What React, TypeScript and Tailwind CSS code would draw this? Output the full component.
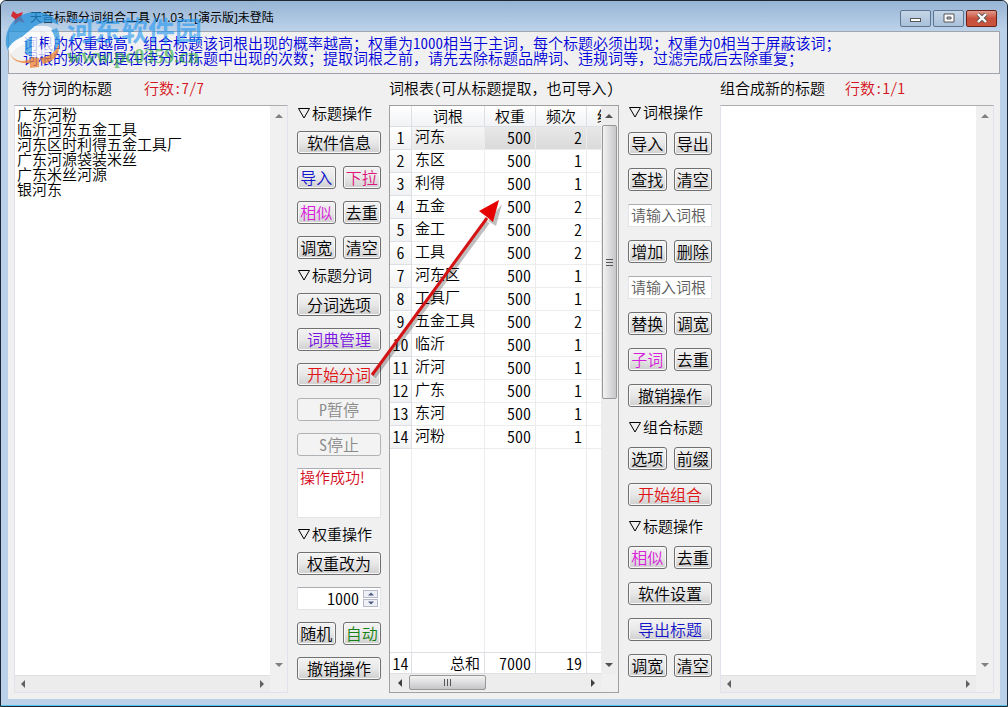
import React from 'react';
import clsx from 'clsx';

const titles = ['广东河粉', '临沂河东五金工具', '河东区时利得五金工具厂', '广东河源袋装米丝', '广东米丝河源', '银河东'];

const roots = [
    { word: '河东', weight: 500, count: 2 },
    { word: '东区', weight: 500, count: 1 },
    { word: '利得', weight: 500, count: 1 },
    { word: '五金', weight: 500, count: 2 },
    { word: '金工', weight: 500, count: 2 },
    { word: '工具', weight: 500, count: 2 },
    { word: '河东区', weight: 500, count: 1 },
    { word: '工具厂', weight: 500, count: 1 },
    { word: '五金工具', weight: 500, count: 2 },
    { word: '临沂', weight: 500, count: 1 },
    { word: '沂河', weight: 500, count: 1 },
    { word: '广东', weight: 500, count: 1 },
    { word: '东河', weight: 500, count: 1 },
    { word: '河粉', weight: 500, count: 1 },
];

type Direction = 'up' | 'down' | 'left' | 'right';

const arrowPaths: Record<Direction, string> = {
    up: 'M0 6 L4 2 L8 6 Z',
    down: 'M0 2 L4 6 L8 2 Z',
    left: 'M6 0 L2 4 L6 8 Z',
    right: 'M2 0 L6 4 L2 8 Z',
};

const Arrow: React.FC<{ dir: Direction; className?: string }> = ({ dir, className }) => (
    <svg viewBox="0 0 8 8" className={clsx('w-2 h-2 shrink-0', className)} aria-hidden="true">
        <path d={arrowPaths[dir]} fill="currentColor" />
    </svg>
);

// half-width latin glyphs, two to one hanzi
const Half: React.FC<{ children: React.ReactNode }> = ({ children }) => (
    <span className="[font-feature-settings:'hwid']">{children}</span>
);

interface BtnProps {
    children: React.ReactNode;
    className?: string;
    disabled?: boolean;
}

const Btn: React.FC<BtnProps> = ({ children, className, disabled }) => (
    <button
        disabled={disabled}
        className={clsx(
            "flex-1 h-[23px] flex items-center justify-center rounded-[3px] border pb-0.5 text-base leading-5 whitespace-nowrap [font-feature-settings:'hwid']",
            disabled
                ? 'border-[#b0b3b6] bg-[#f3f3f3] text-[#8a8a8a]'
                : 'border-[#707070] bg-linear-to-b from-[#f3f3f3] via-[#e8e8e8] to-[#cfcfcf] shadow-[inset_0_0_0_1px_#f8f8f8]',
            className,
        )}
    >
        {children}
    </button>
);

const Row: React.FC<{ children: React.ReactNode }> = ({ children }) => <div className="flex gap-[7px]">{children}</div>;

const Heading: React.FC<{ children: React.ReactNode }> = ({ children }) => (
    <h2 className="flex items-center text-[15px] leading-5 whitespace-nowrap">
        <svg viewBox="0 0 15 15" className="w-[15px] h-[15px]" aria-hidden="true">
            <path d="M1.5 2.5 H12.5 L7 12 Z" fill="none" stroke="#000" />
        </svg>
        {children}
    </h2>
);

const WordInput: React.FC<{ label: string }> = ({ label }) => (
    <input
        type="text"
        aria-label={label}
        placeholder="请输入词根"
        className="w-full h-[23px] bg-white border border-[#e3e3e8] border-t-[#abadb3] pl-0.5 pb-0.5 text-[15px] leading-5 placeholder:text-[#5d5d5d] outline-none"
    />
);

const TextBox: React.FC<{ label: string; value?: string }> = ({ label, value }) => (
    <div className="flex-1 grid grid-cols-[1fr_17px] grid-rows-[1fr_17px] border border-[#e2e3ea] border-t-[#abadb3] bg-[#ececec]">
        <textarea
            aria-label={label}
            defaultValue={value}
            spellCheck={false}
            className="bg-white resize-none outline-none overflow-hidden px-0.5 text-[15px] leading-[15px]"
        />
        <div className="flex flex-col items-center justify-between py-1.5 bg-[#f0f0f0] text-[#808080]">
            <Arrow dir="up" />
            <Arrow dir="down" />
        </div>
        <div className="flex items-center justify-between px-1 text-[#606060] border-t border-[#e0e0e0]">
            <Arrow dir="left" />
            <Arrow dir="right" />
        </div>
        <div className="bg-[#f0f0f0]" />
    </div>
);

const Columns = () => (
    <colgroup>
        <col className="w-[22px]" />
        <col className="w-[73px]" />
        <col className="w-[51px]" />
        <col className="w-[51px]" />
        <col />
    </colgroup>
);

const RootTable = () => (
    <div className="flex-1 grid grid-cols-[1fr_16px] grid-rows-[1fr_17px] border border-[#a0a0a0] bg-[#f0f0f0] text-[15px] pr-px pb-px">
        <div className="flex flex-col bg-white overflow-hidden">
            <table className="table-fixed w-full border-separate border-spacing-0 whitespace-nowrap">
                <Columns />
                <thead>
                    <tr className="h-[21px] bg-linear-to-b from-white to-[#f1f2f4] leading-5 align-top">
                        <th className="border-r border-b border-[#dcdfe4] p-0" />
                        <th className="border-r border-b border-[#dcdfe4] p-0 font-[350]">词根</th>
                        <th className="border-r border-b border-[#dcdfe4] p-0 font-[350]">权重</th>
                        <th className="border-r border-b border-[#dcdfe4] p-0 font-[350]">频次</th>
                        <th className="border-b border-[#dcdfe4] p-0 pl-2.5 font-[350] text-left overflow-hidden">结</th>
                    </tr>
                </thead>
                <tbody>
                    {roots.map((r, i) => (
                        <tr key={r.word} className={clsx('h-[23px] leading-5 align-top', i === 0 && 'bg-linear-to-b from-[#e8e8e8] to-[#d9d9d9]')}>
                            <td className="border-r border-b border-[#dcdfe4] bg-linear-to-b from-white to-[#f1f2f4] p-0 text-center text-base leading-5"><Half>{i + 1}</Half></td>
                            <td className={clsx('border-r border-b border-[#ececec] p-0 pl-[3px] leading-[18px]', i === 0 && 'bg-linear-to-b from-[#f6f6f6] to-[#e8e8e8]')}>{r.word}</td>
                            <td className="border-r border-b border-[#ececec] p-0 pr-1 text-right text-base leading-5"><Half>{r.weight}</Half></td>
                            <td className="border-r border-b border-[#ececec] p-0 pr-1 text-right text-base leading-5"><Half>{r.count}</Half></td>
                            <td className="border-b border-[#ececec] p-0" />
                        </tr>
                    ))}
                </tbody>
            </table>
            <div className="flex-1 grid grid-cols-[22px_73px_51px_51px_1fr]">
                <div className="border-r border-[#ececec]" />
                <div className="border-r border-[#ececec]" />
                <div className="border-r border-[#ececec]" />
                <div className="border-r border-[#ececec]" />
            </div>
            <table className="table-fixed w-full border-separate border-spacing-0">
                <Columns />
                <tbody>
                    <tr className="h-[22px] leading-[18px] text-right">
                        <td className="border-r border-y border-[#dcdfe4] p-0 text-center text-base leading-[18px]"><Half>14</Half></td>
                        <td className="border-r border-y border-[#dcdfe4] p-0 pr-1">总和</td>
                        <td className="border-r border-y border-[#dcdfe4] p-0 pr-1 text-base leading-[18px]"><Half>7000</Half></td>
                        <td className="border-r border-y border-[#dcdfe4] p-0 pr-1 text-base leading-[18px]"><Half>19</Half></td>
                        <td className="border-y border-[#dcdfe4] p-0" />
                    </tr>
                </tbody>
            </table>
        </div>
        <div className="flex flex-col items-center bg-[#ededed] text-[#505050]">
            <div className="h-[19px] flex items-center">
                <Arrow dir="up" />
            </div>
            <div className="w-[15px] h-[274px] flex flex-col items-center justify-center gap-0.5 rounded-xs border border-[#979797] bg-linear-to-r from-[#f3f3f3] to-[#c6c6ca]">
                <i className="w-[7px] h-px bg-[#555]" />
                <i className="w-[7px] h-px bg-[#555]" />
                <i className="w-[7px] h-px bg-[#555]" />
            </div>
            <div className="mt-auto h-[19px] flex items-center">
                <Arrow dir="down" />
            </div>
        </div>
        <div className="flex items-center bg-[#ededed] text-[#404040]">
            <div className="w-[19px] flex justify-center">
                <Arrow dir="left" />
            </div>
            <div className="w-[77px] h-[15px] flex items-center justify-center gap-0.5 rounded-xs border border-[#979797] bg-linear-to-b from-[#f3f3f3] to-[#c6c6ca]">
                <i className="w-px h-[7px] bg-[#555]" />
                <i className="w-px h-[7px] bg-[#555]" />
                <i className="w-px h-[7px] bg-[#555]" />
            </div>
            <Arrow dir="right" className="ml-auto mr-1" />
        </div>
    </div>
);

const Watermark = () => (
    <div className="absolute left-1 top-2.5 flex items-center gap-0.5 pointer-events-none" aria-hidden="true">
        <svg viewBox="0 0 60 58" className="w-[60px] h-[58px] opacity-75">
            <path d="M1 34 C-1 14 14 1 30 1 C42 1 50 6 54 14 C46 10 38 11 32 14 L14 29 C8 33 4 36 3 40 Z" fill="#2593dc" />
            <path d="M3 38 C6 32 12 28 17 26 L30 15 L35 15 L35 46 L27 46 L27 29 C18 34 8 38 6 43 Z" fill="#fff" />
            <path d="M20 30 L27 25 L27 46 L20 42 Z" fill="#3a9fe2" />
            <path d="M35 15 C46 13 52 20 51 29 C50 38 44 44 35 46 L35 39 C41 37 44 33 44 28 C44 23 41 20 35 21 Z" fill="#fff" />
            <path d="M52 17 C57 26 55 36 48 43 C51 34 51 25 46 19 Z" fill="#3a9fe2" />
            <path d="M5 42 C8 50 18 52 26 48 L26 46 L34 47 L34 56 L25 57 L25 52 C15 53 7 50 5 42 Z" fill="#f08430" />
            <path d="M35 47 C44 46 51 41 54 33 C55 43 50 50 38 53 Z" fill="#f08430" />
        </svg>
        <div className="flex flex-col whitespace-nowrap opacity-60">
            <span className="text-[27px] leading-8 font-bold text-[#1e96f0]">河东软件园</span>
            <span className="font-['Liberation_Serif',serif] text-xl leading-5 font-bold text-[#28a83c]">www.pc0359.cn</span>
        </div>
    </div>
);

const TitleBar = () => (
    <header className="h-[30px] flex items-center pt-1 pl-2 pr-2.5 bg-linear-to-b from-[#97b4d4] to-[#bcd2ea] rounded-t-md">
        <svg viewBox="0 0 18 18" className="w-[18px] h-[18px]" aria-hidden="true">
            <path d="M4 2 L8 5 L14 3 L12 8 L16 14 L10 12 L5 16 L6 10 L2 7 Z" fill="#d22b36" />
        </svg>
        <h1 className="ml-[3px] text-xs leading-5 font-normal font-['Open_Sans','Noto_Sans_CJK_SC',sans-serif]">天音标题分词组合工具 V1.03.1[演示版]未登陆</h1>
        <div className="ml-auto flex gap-0.5">
            <button aria-label="最小化" className="w-[31px] h-[17px] flex items-center justify-center rounded-xs border border-[#5d7591] bg-linear-to-b from-[#c5d6e8] to-[#a9c0da]">
                <svg viewBox="0 0 12 10" className="w-3 h-2.5"><rect x="0.5" y="5.5" width="10" height="3" fill="#fff" stroke="#555" /></svg>
            </button>
            <button aria-label="最大化" className="w-[31px] h-[17px] flex items-center justify-center rounded-xs border border-[#5d7591] bg-linear-to-b from-[#c5d6e8] to-[#a9c0da]">
                <svg viewBox="0 0 12 10" className="w-3 h-2.5"><path d="M1 1 H11 V9 H1 Z M4 4 V6 H8 V4 Z" fill="#fff" fillRule="evenodd" stroke="#555" /></svg>
            </button>
            <button aria-label="关闭" className="w-[31px] h-[17px] flex items-center justify-center rounded-xs border border-[#6b2018] bg-linear-to-b from-[#e09a8c] via-[#c8503c] to-[#c9543c]">
                <svg viewBox="0 0 12 10" className="w-3 h-2.5">
                    <path d="M2 1 L10 9 M10 1 L2 9" stroke="#555" strokeWidth="4" />
                    <path d="M2 1 L10 9 M10 1 L2 9" stroke="#fff" strokeWidth="2.4" />
                </svg>
            </button>
        </div>
    </header>
);

// callout from the start button to the weight column
const Callout = () => (
    <svg viewBox="0 0 140 190" className="absolute left-[367px] top-[193px] w-[140px] h-[190px] pointer-events-none" aria-hidden="true">
        <path d="M6 183 L120 28" stroke="#000" strokeOpacity="0.25" strokeWidth="4" />
        <path d="M134 10 L128 32 L120 27 Z" fill="#000" fillOpacity="0.25" />
        <path d="M4 181 L119 24" stroke="#d41414" strokeWidth="3" />
        <path d="M131 6 L125 28 L119 23 L111 17 Z" fill="#e60000" />
    </svg>
);

const App: React.FC = () => (
    <div
        lang="zh-CN"
        className="relative min-h-screen flex flex-col bg-[#bbd1e9] border border-[#1c2733] rounded-t-md shadow-[inset_0_-1px_0_#4fc3ea] text-black font-[350] font-['Noto_Sans_CJK_SC',sans-serif]"
    >
        <TitleBar />
        <main className="flex-1 flex flex-col mx-[7px] mb-[7px] bg-[#f0f0f0]">
            <p className="border border-[#a0a5ab] pt-[3px] pl-3.5 h-[43px] text-[15px] leading-[15px] text-[#0000d8] whitespace-nowrap">
                词根的权重越高，组合标题该词根出现的概率越高；权重为<Half>1000</Half>相当于主词，每个标题必须出现；权重为<Half>0</Half>相当于屏蔽该词；
                <br />
                词根的频次即是在待分词标题中出现的次数；提取词根之前，请先去除标题品牌词、违规词等，过滤完成后去除重复；
            </p>
            <div className="flex-1 flex gap-2 px-1.5 pb-1.5">
                <section className="flex-1 flex flex-col">
                    <div className="h-[31px] flex items-center gap-8 pl-2 pb-0.5 text-[15px] whitespace-nowrap">
                        <span>待分词的标题</span>
                        <span className="text-[#d41420]"><Half>行数:7/7</Half></span>
                    </div>
                    <TextBox label="待分词的标题" value={titles.join('\n')} />
                </section>

                <section className="w-[85px] flex flex-col gap-1.5 pt-[29px] pl-px">
                    <div className="flex flex-col gap-2">
                        <Heading>标题操作</Heading>
                        <div className="flex flex-col gap-3">
                            <Row><Btn>软件信息</Btn></Row>
                            <Row><Btn className="text-[#1414c8]">导入</Btn><Btn className="text-[#e0147c]">下拉</Btn></Row>
                            <Row><Btn className="text-[#d81ed8]">相似</Btn><Btn>去重</Btn></Row>
                            <Row><Btn>调宽</Btn><Btn>清空</Btn></Row>
                        </div>
                    </div>
                    <div className="flex flex-col gap-2">
                        <Heading>标题分词</Heading>
                        <div className="flex flex-col gap-3">
                            <Row><Btn>分词选项</Btn></Row>
                            <Row><Btn className="text-[#7a14e0]">词典管理</Btn></Row>
                            <Row><Btn className="text-[#e01414]">开始分词</Btn></Row>
                            <Row><Btn disabled>P暂停</Btn></Row>
                            <Row><Btn disabled>S停止</Btn></Row>
                            <textarea
                                aria-label="操作结果"
                                readOnly
                                defaultValue="操作成功!"
                                className="h-[50px] bg-white border border-[#e3e3e8] border-t-[#abadb3] resize-none outline-none overflow-hidden px-0.5 text-[15px] leading-[15px] text-[#d40c1c]"
                            />
                        </div>
                    </div>
                    <div className="flex flex-col gap-2">
                        <Heading>权重操作</Heading>
                        <div className="flex flex-col gap-3">
                            <Row><Btn>权重改为</Btn></Row>
                            <div className="h-[23px] flex items-center bg-white border border-[#e3e3e8] border-t-[#abadb3] pr-0.5">
                                <input type="text" aria-label="权重" defaultValue="1000" className="flex-1 min-w-0 text-right pr-1 pb-0.5 text-base leading-5 outline-none [font-feature-settings:'hwid']" />
                                <div className="flex flex-col gap-px text-[#4a5a80]">
                                    <button aria-label="增大" className="w-[15px] h-2 flex items-center justify-center border border-[#b4b8c8] bg-[#eef0f6]"><Arrow dir="up" className="scale-75" /></button>
                                    <button aria-label="减小" className="w-[15px] h-2 flex items-center justify-center border border-[#b4b8c8] bg-[#eef0f6]"><Arrow dir="down" className="scale-75" /></button>
                                </div>
                            </div>
                            <Row><Btn>随机</Btn><Btn className="text-[#148214]">自动</Btn></Row>
                            <Row><Btn>撤销操作</Btn></Row>
                        </div>
                    </div>
                </section>

                <section className="w-[230px] flex flex-col">
                    <div className="h-[31px] flex items-center pb-0.5 text-[15px] whitespace-nowrap">
                        词根表<Half>(</Half>可从标题提取，也可导入<Half>)</Half>
                    </div>
                    <RootTable />
                </section>

                <section className="w-[85px] flex flex-col gap-2.5 pt-7 pl-px">
                    <div className="flex flex-col gap-2.5">
                        <Heading>词根操作</Heading>
                        <div className="flex flex-col gap-[13px]">
                            <Row><Btn>导入</Btn><Btn>导出</Btn></Row>
                            <Row><Btn>查找</Btn><Btn>清空</Btn></Row>
                            <WordInput label="查找词根" />
                            <Row><Btn>增加</Btn><Btn>删除</Btn></Row>
                            <WordInput label="替换词根" />
                            <Row><Btn>替换</Btn><Btn>调宽</Btn></Row>
                            <Row><Btn className="text-[#d81ed8]">子词</Btn><Btn>去重</Btn></Row>
                            <Row><Btn>撤销操作</Btn></Row>
                        </div>
                    </div>
                    <div className="flex flex-col gap-2.5">
                        <Heading>组合标题</Heading>
                        <div className="flex flex-col gap-[13px]">
                            <Row><Btn>选项</Btn><Btn>前缀</Btn></Row>
                            <Row><Btn className="text-[#e01414]">开始组合</Btn></Row>
                        </div>
                    </div>
                    <div className="flex flex-col gap-2.5">
                        <Heading>标题操作</Heading>
                        <div className="flex flex-col gap-[13px]">
                            <Row><Btn className="text-[#d81ed8]">相似</Btn><Btn>去重</Btn></Row>
                            <Row><Btn>软件设置</Btn></Row>
                            <Row><Btn className="text-[#1414c8]">导出标题</Btn></Row>
                            <Row><Btn>调宽</Btn><Btn>清空</Btn></Row>
                        </div>
                    </div>
                </section>

                <section className="flex-1 flex flex-col">
                    <div className="h-[31px] flex items-center gap-5 pb-0.5 text-[15px] whitespace-nowrap">
                        <span>组合成新的标题</span>
                        <span className="text-[#d41420]"><Half>行数:1/1</Half></span>
                    </div>
                    <TextBox label="组合成新的标题" />
                </section>
            </div>
        </main>
        <Watermark />
        <Callout />
    </div>
);

export default App;
